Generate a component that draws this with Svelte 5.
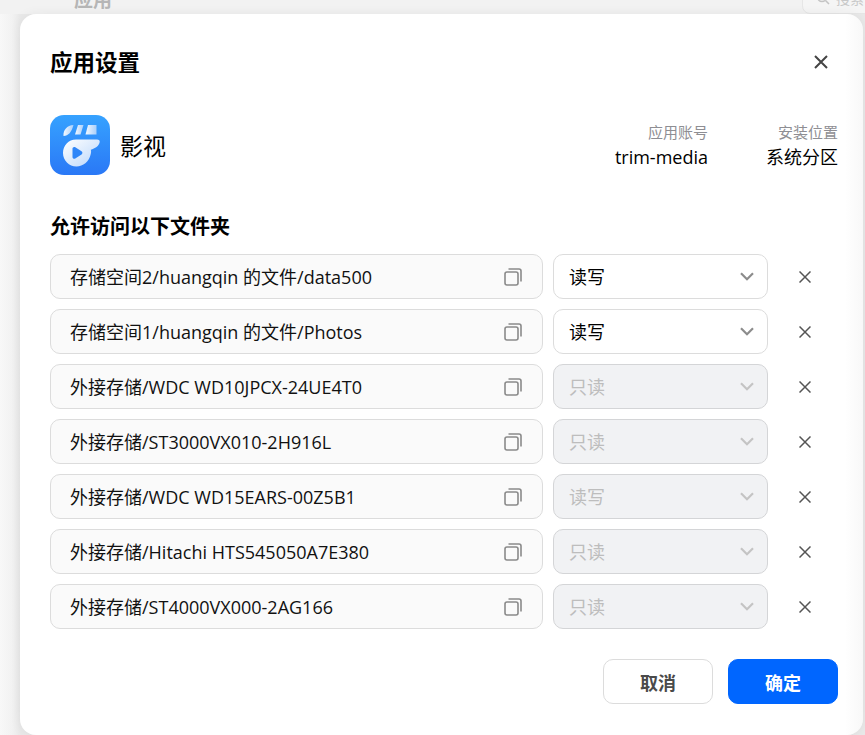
<script>
  const rows = [
    { path: '存储空间2/huangqin 的文件/data500', mode: '读写', disabled: false },
    { path: '存储空间1/huangqin 的文件/Photos', mode: '读写', disabled: false },
    { path: '外接存储/WDC WD10JPCX-24UE4T0', mode: '只读', disabled: true },
    { path: '外接存储/ST3000VX010-2H916L', mode: '只读', disabled: true },
    { path: '外接存储/WDC WD15EARS-00Z5B1', mode: '读写', disabled: true },
    { path: '外接存储/Hitachi HTS545050A7E380', mode: '只读', disabled: true },
    { path: '外接存储/ST4000VX000-2AG166', mode: '只读', disabled: true }
  ];
</script>

<div class="page">
  <div class="behind" aria-hidden="true">
    <span class="behind-title">应用</span>
    <span class="behind-search">
      <svg width="14" height="14" viewBox="0 0 14 14" fill="none" stroke="#c4c4c4" stroke-width="1.5"><circle cx="6" cy="6" r="4.5"/><path d="M9.5 9.5 13 13"/></svg>
      <span>搜索</span>
    </span>
  </div>
  <div class="modal">
    <header class="head">
      <h1>应用设置</h1>
      <button class="close" aria-label="关闭">
        <svg width="16" height="16" viewBox="0 0 16 16" fill="none" stroke="#444" stroke-width="2"><path d="M2 2 14 14M14 2 2 14"/></svg>
      </button>
    </header>

    <section class="app">
      <svg class="logo" width="60" height="60" viewBox="0 0 60 60">
        <defs>
          <linearGradient id="bg" x1="0" y1="0" x2="0" y2="1"><stop offset="0" stop-color="#36a2ff"/><stop offset="1" stop-color="#2a78f6"/></linearGradient>
          <linearGradient id="wh" x1="0" y1="0" x2="1" y2="1"><stop offset="0" stop-color="#ffffff"/><stop offset="1" stop-color="#b9d6fb"/></linearGradient>
          <linearGradient id="tp" x1="0" y1="0" x2="1" y2="0"><stop offset="0" stop-color="#f4f9ff"/><stop offset="1" stop-color="#a9cffb"/></linearGradient>
        </defs>
        <rect width="60" height="60" rx="14" fill="url(#bg)"/>
        <path d="M23.500 10 C17 10.500 13 15 13.500 21 C18.500 21 21.500 17 23.500 10Z" fill="url(#tp)"/>
        <path d="M28 10H33.500L30.500 19.500H25Z" fill="url(#tp)"/>
        <path d="M38 10H46.500V19.500H35.500Z" fill="url(#tp)"/>
        <path d="M26 24.500 H47 C49 24.500 50 25.500 49.700 27 C49 31 45 33.500 40.800 34.800 C41.200 36.200 41.300 37.500 40.500 40 C39 46.500 33 51.500 26.500 51.500 C19 51.500 13 45.500 13 38 C13 30.500 18.500 24.500 26 24.500Z" fill="url(#wh)"/>
        <path d="M22.500 33.800 C22.500 32.300 24 31.500 25.300 32.300 L31.500 36.300 C32.700 37.100 32.700 38.700 31.500 39.500 L25.300 43.500 C24 44.300 22.500 43.500 22.500 42Z" fill="#2f86f8"/>
      </svg>
      <span class="app-name">影视</span>
      <div class="meta meta-account">
        <span class="meta-label">应用账号</span>
        <span class="meta-value">trim-media</span>
      </div>
      <div class="meta">
        <span class="meta-label">安装位置</span>
        <span class="meta-value">系统分区</span>
      </div>
    </section>

    <h2>允许访问以下文件夹</h2>

    <div class="rows">
      {#each rows as row}
        <div class="row">
          <div class="path">
            <span class="cell-text">{row.path}</span>
            <svg width="18" height="18" viewBox="0 0 18 18" fill="none" stroke="#8a8a8a" stroke-width="1.600">
              <rect x="1" y="4" width="13" height="13" rx="2"/>
              <path d="M4.500 1H15C16.100 1 17 1.900 17 3V13.500"/>
            </svg>
          </div>
          <div class="select" class:disabled={row.disabled}>
            <span class="cell-text">{row.mode}</span>
            <svg width="14" height="9" viewBox="0 0 14 9" fill="none" stroke-width="2.200"><path d="M1 1.200 7 7.200 13 1.200"/></svg>
          </div>
          <button class="remove" aria-label="移除">
            <svg width="12" height="12" viewBox="0 0 12 12" fill="none" stroke="#555" stroke-width="1.500"><path d="M.5.5 11.500 11.500M11.500.5.500 11.500"/></svg>
          </button>
        </div>
      {/each}
    </div>

    <footer class="foot">
      <button class="btn">取消</button>
      <button class="btn primary">确定</button>
    </footer>
  </div>
</div>

<style>
  :global(body) {
    margin: 0;
    background: #f4f4f5;
  }
  * {
    box-sizing: border-box;
  }
  .page {
    position: relative;
    width: 865px;
    height: 735px;
    overflow: hidden;
    padding: 14px 2px 0 20px;
    font-family: "Open Sans", "Noto Sans CJK SC", sans-serif;
    color: #000;
    background: linear-gradient(90deg, #f8f8f8 0, #f2f2f2 12px, #e9e9e9 20px);
  }
  .behind {
    position: absolute;
    inset: 0 0 auto 0;
    height: 14px;
    background: #f2f2f2;
  }
  .behind-title {
    position: absolute;
    left: 74px;
    top: -13px;
    font-size: 19px;
    line-height: 26px;
    font-weight: 700;
    color: #b6b6b6;
  }
  .behind-search {
    position: absolute;
    left: 802px;
    top: -18px;
    width: 90px;
    height: 32px;
    display: flex;
    align-items: center;
    gap: 6px;
    padding-left: 13px;
    border: 1px solid #e6e6e6;
    border-radius: 8px;
    font-size: 14px;
    color: #c8c8c8;
    background: #f5f5f5;
  }
  .modal {
    position: relative;
    height: 721px;
    padding: 0 25px 0 30px;
    border-radius: 16px;
    background: linear-gradient(90deg, #fff 825px, #f8f8f8 843px);
    box-shadow: 0 0 12px rgba(0, 0, 0, 0.06);
  }
  .head {
    display: flex;
    align-items: center;
    justify-content: space-between;
    height: 98px;
  }
  h1 {
    margin: 0;
    font-size: 22.500px;
    line-height: 30px;
    font-weight: 700;
  }
  .close,
  .remove {
    display: flex;
    align-items: center;
    justify-content: center;
    padding: 0;
    border: 0;
    background: none;
  }
  .close {
    width: 16px;
    height: 16px;
    margin-right: 9px;
    margin-bottom: 2px;
  }
  .app {
    display: flex;
    align-items: center;
    height: 60px;
    margin-top: 3px;
  }
  .logo {
    flex: none;
  }
  .app-name {
    margin-left: 10px;
    padding-top: 2px;
    font-size: 23px;
    line-height: 30px;
  }
  .meta {
    display: flex;
    flex-direction: column;
    align-items: flex-end;
    gap: 2px;
    margin-left: 60px;
    padding-top: 1px;
  }
  .meta-account {
    margin-left: auto;
    margin-right: -2px;
  }
  .meta-label {
    font-size: 15px;
    line-height: 20px;
    color: #8e8e93;
  }
  .meta-value {
    font-size: 18px;
    line-height: 26px;
  }
  h2 {
    margin: 38px 0 0;
    font-size: 20px;
    line-height: 28px;
    font-weight: 700;
  }
  .rows {
    display: flex;
    flex-direction: column;
    gap: 10px;
    margin-top: 13px;
  }
  .row {
    display: grid;
    grid-template-columns: 493px 215px 54px;
    column-gap: 10px;
    height: 45px;
  }
  .path,
  .select {
    display: flex;
    align-items: center;
    justify-content: space-between;
    border: 1px solid #dcdcdc;
    border-radius: 10px;
    font-size: 18px;
  }
  .cell-text {
    padding-bottom: 2px;
  }
  .path {
    padding: 0 20px 0 19px;
    background: #fafafa;
    color: #111;
  }
  .select {
    padding: 0 13px 0 15px;
    background: #fff;
  }
  .select svg {
    stroke: #8c8c8c;
  }
  .select.disabled {
    background: #f1f2f4;
    color: #bdbdbd;
    border-color: #d4d5d7;
  }
  .select.disabled svg {
    stroke: #c4c4c4;
  }
  .remove {
    width: 54px;
  }
  .foot {
    display: flex;
    justify-content: flex-end;
    gap: 15px;
    margin-top: 30px;
  }
  .btn {
    width: 110px;
    height: 45px;
    padding: 0;
    border: 1px solid #dcdcdc;
    border-radius: 10px;
    background: #fff;
    color: #4a4a4a;
    font: 700 18px "Open Sans", "Noto Sans CJK SC", sans-serif;
  }
  .primary {
    background: #0066ff;
    border-color: #0066ff;
    color: #fff;
  }
</style>
